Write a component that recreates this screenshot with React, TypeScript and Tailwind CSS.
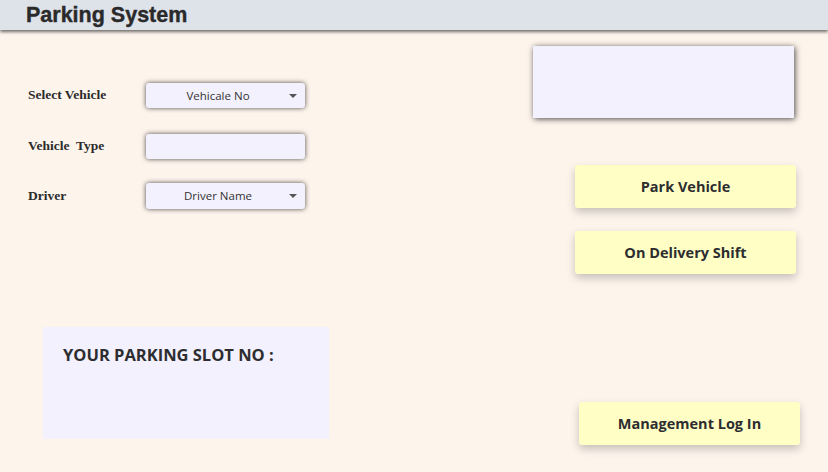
import { useState } from "react";

function Arrow() {
  return (
    <svg width="8" height="4" viewBox="0 0 8 4" className="absolute right-[8px] top-1/2 -translate-y-1/2">
      <path d="M0 0 L8 0 L4 4 Z" fill="#555" />
    </svg>
  );
}

function FieldRow({ label, className = "", children }: { label: string; className?: string; children: React.ReactNode }) {
  return (
    <div className={`flex items-center ${className}`}>
      <span className="w-[118px] whitespace-pre text-[13.5px] font-bold text-[#2b2b2b] [font-family:'Liberation_Serif',serif]">
        {label}
      </span>
      {children}
    </div>
  );
}

function YellowButton({ label }: { label: string }) {
  return (
    <button className="w-[221px] h-[43px] rounded-[3px] bg-[#ffffc5] text-[14.5px] font-bold text-[#2d2d30] shadow-[0_4px_8px_rgba(0,0,0,0.22)] [font-family:'Open_Sans',sans-serif]">
      {label}
    </button>
  );
}

export default function App() {
  const [vehicle] = useState("Vehicale No");
  const [driver] = useState("Driver Name");

  return (
    <div className="w-[828px] h-[472px] overflow-hidden bg-[#fdf4ec] flex flex-col">
      <header className="h-[30px] shrink-0 bg-[#dee3ea] shadow-[0_2px_3px_rgba(0,0,0,0.55)] pl-[26px] flex items-start relative z-10">
        <h1 className="-mt-[1px] text-[21.5px] font-bold text-[#2a2a2a] [font-family:'Liberation_Sans',Arial,sans-serif] [-webkit-text-stroke:0.4px_#2a2a2a]">
          Parking System
        </h1>
      </header>

      <main className="flex-1 flex justify-between">
        {/* 왼쪽: 입력 폼 + 주차 슬롯 */}
        <div className="flex flex-col">
          <div className="pl-[28px] pt-[53px] flex flex-col">
            <FieldRow label="Select Vehicle">
              <div className="relative w-[159px] h-[25px] rounded-[3px] bg-[#f2f1fd] shadow-[0_0_5px_rgba(0,0,0,0.7)] flex items-center justify-center pr-[15px] text-[11.5px] text-[#333] [font-family:'Open_Sans',sans-serif]">
                {vehicle}
                <Arrow />
              </div>
            </FieldRow>
            <FieldRow label="Vehicle  Type" className="mt-[26px]">
              <div className="w-[159px] h-[25px] rounded-[3px] bg-[#f2f1fd] shadow-[0_0_5px_rgba(0,0,0,0.7)]" />
            </FieldRow>
            <FieldRow label="Driver" className="mt-[24px]">
              <div className="relative w-[159px] h-[26px] rounded-[3px] bg-[#f2f1fd] shadow-[0_0_5px_rgba(0,0,0,0.7)] flex items-center justify-center pr-[15px] text-[11.5px] text-[#333] [font-family:'Open_Sans',sans-serif]">
                {driver}
                <Arrow />
              </div>
            </FieldRow>
          </div>

          <div className="ml-[43px] mt-[118px] w-[286px] h-[112px] bg-[#f2f1fd] pl-[20px] pt-[16px]">
            <p className="text-[16.5px] font-bold text-[#2d2d30] [font-family:'Open_Sans',sans-serif]">
              YOUR PARKING SLOT NO :
            </p>
          </div>
        </div>

        {/* 오른쪽: 표시창 + 버튼 */}
        <div className="flex flex-col pr-[28px] pt-[16px]">
          <div className="w-[261px] h-[72px] bg-[#f2f1fd] shadow-[1px_1px_6px_rgba(0,0,0,0.7)]" />
          <div className="ml-[42px] mt-[47px] flex flex-col gap-[23px]">
            <YellowButton label="Park Vehicle" />
            <YellowButton label="On Delivery Shift" />
          </div>
          <div className="ml-[46px] mt-[128px]">
            <YellowButton label="Management Log In" />
          </div>
        </div>
      </main>
    </div>
  );
}
